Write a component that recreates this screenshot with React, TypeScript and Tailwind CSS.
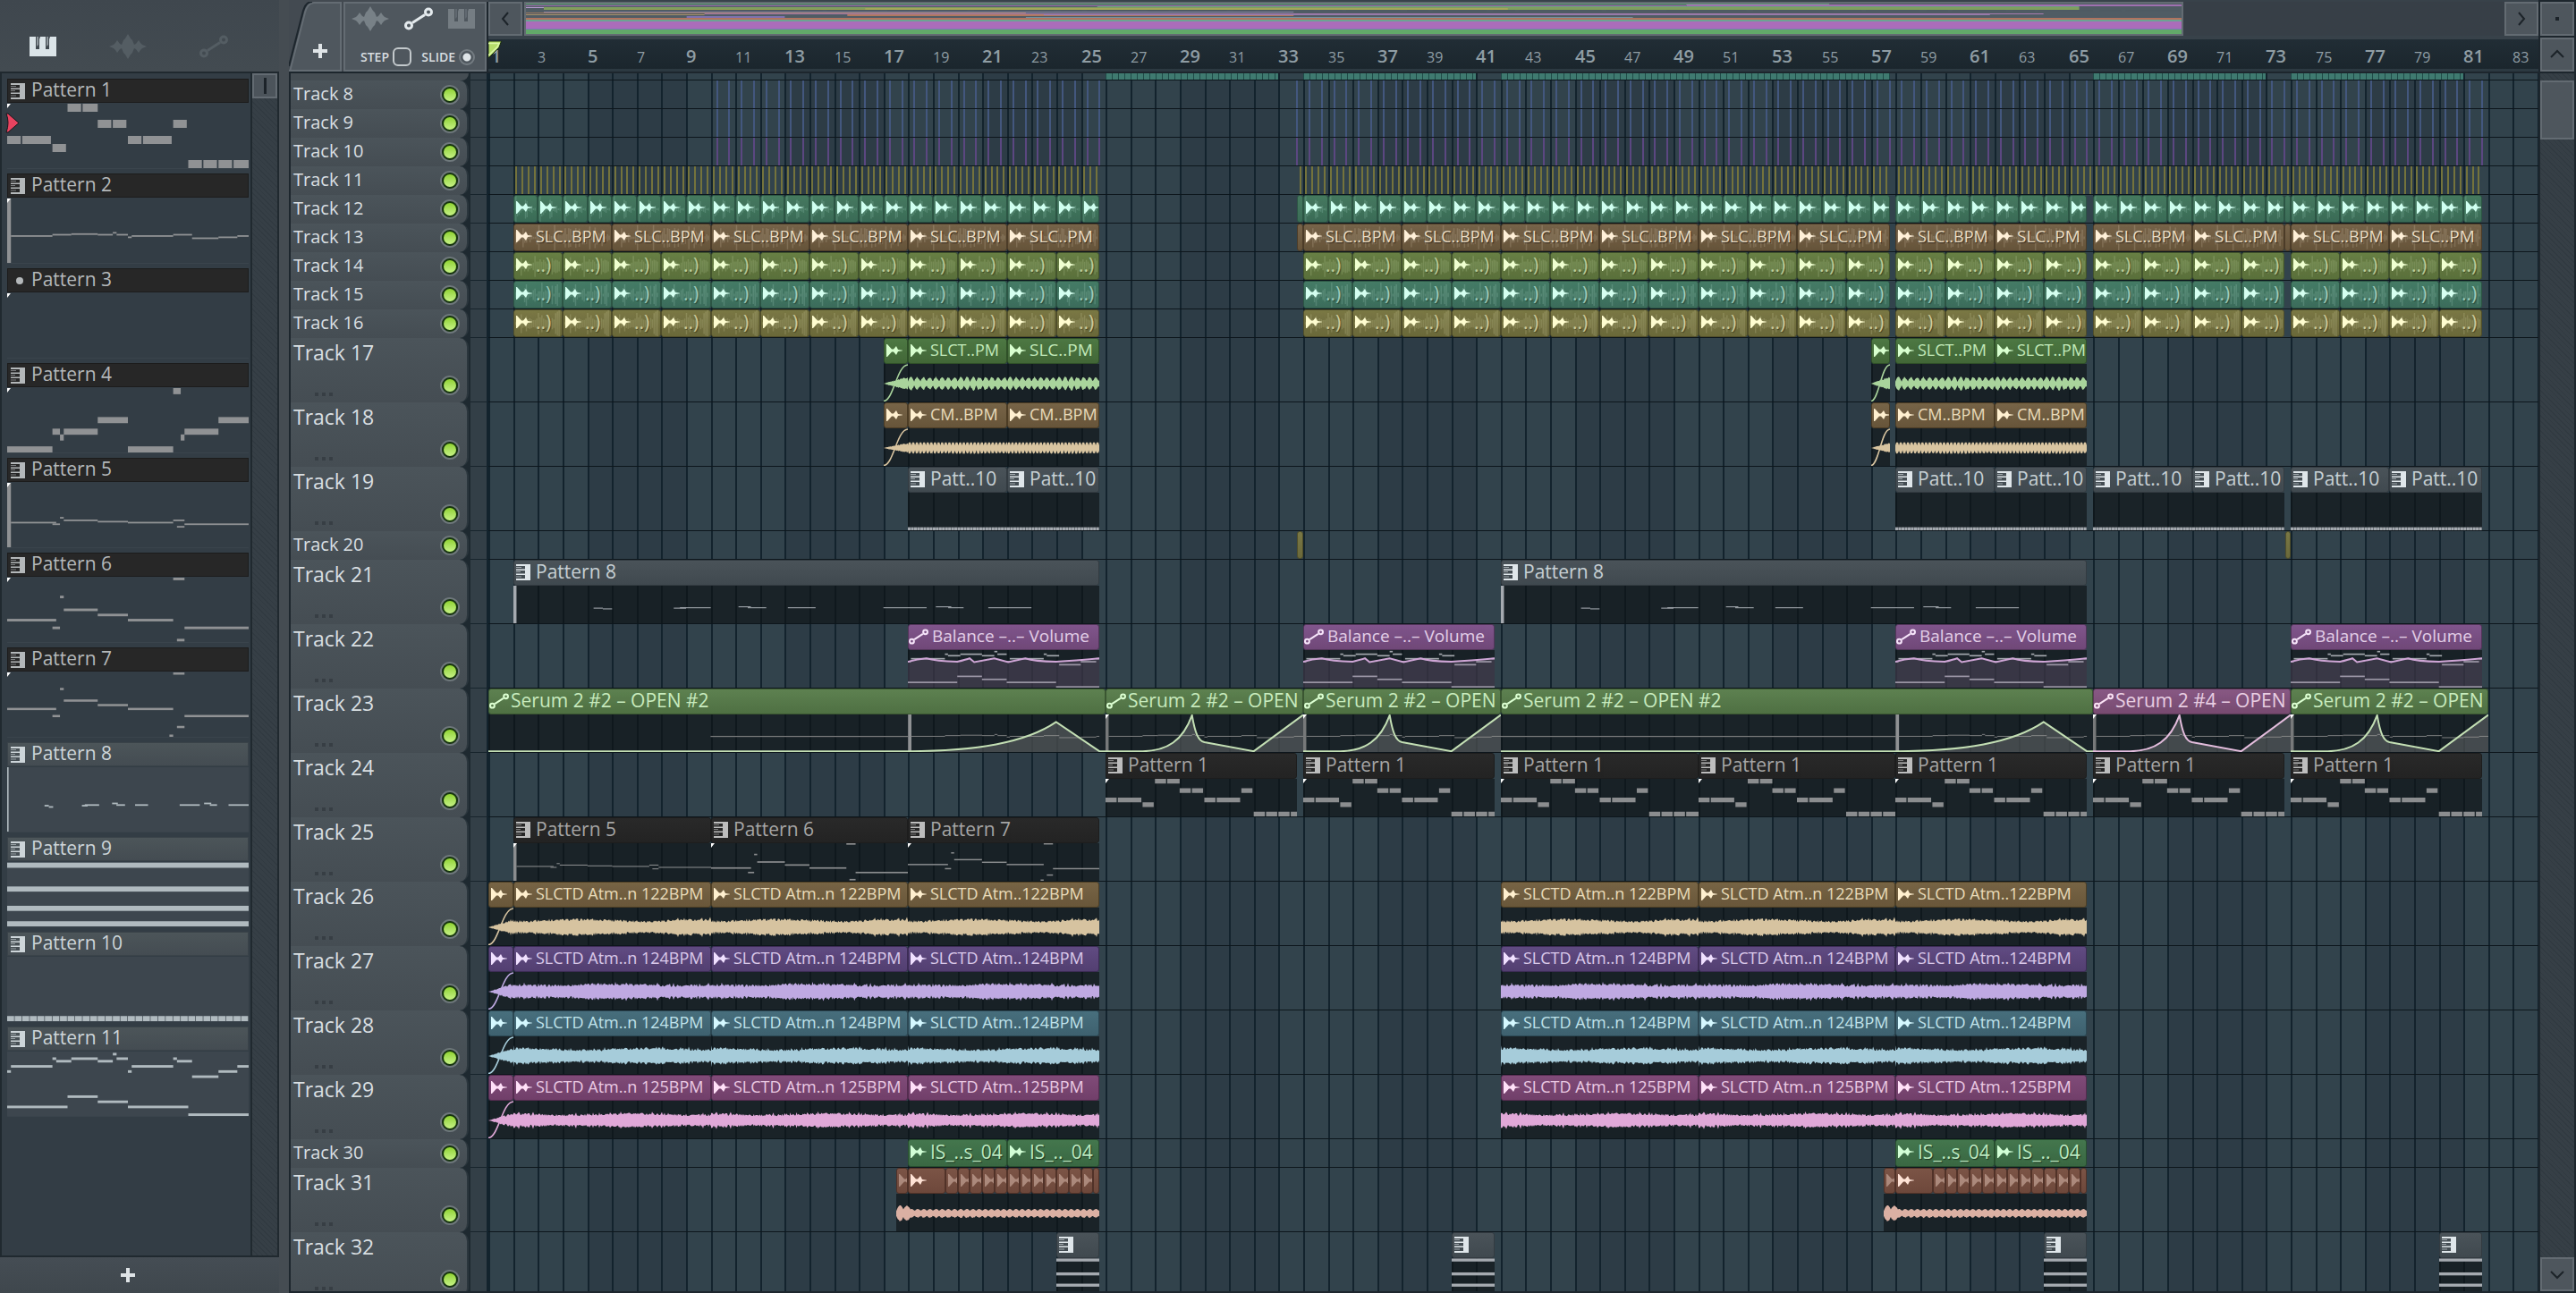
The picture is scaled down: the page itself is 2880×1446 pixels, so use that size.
import { ReactNode } from 'react';

const BAR = 27.6;
const TOTAL_BARS = 84;

// left edge of a bar on the timeline, snapped to a whole pixel
const at = (bar: number) => Math.round(0.2 + (bar - 1) * BAR);

type Note = [x: number, width: number, y: number];

type PatternShape = {
  notes: Note[];
  height: number;
  units: number;
  lead?: number;
};

// note positions are in 1/8 bars, y and height in percent
const SHAPES: Record<number, PatternShape> = {
  1: {
    height: 12.5,
    units: 64,
    notes: [
      [0, 3.6, 50], [4, 7.6, 50], [12, 3.6, 62.5], [16, 3.6, 0], [20, 4, 0],
      [24, 3.6, 25], [28, 3.6, 25], [32, 3.6, 50], [36, 7.6, 50], [44, 3.6, 25],
      [48, 3.6, 87.5], [52, 3.6, 87.5], [56, 3.6, 87.5], [60, 4, 87.5],
    ],
  },
  2: {
    height: 2.5,
    units: 64,
    lead: 1,
    notes: [
      [1, 11, 57], [12, 5, 55], [17, 7, 54], [24, 4, 55], [28, 1, 52], [29, 3, 55],
      [32, 1, 59], [33, 11, 57], [44, 5, 55], [49, 7, 60.5], [56, 5, 59], [61, 3, 57],
    ],
  },
  3: { height: 4, units: 64, notes: [] },
  4: {
    height: 9.5,
    units: 64,
    notes: [
      [0, 12, 90.5], [12, 2, 63], [14, 1, 72], [15, 9, 63], [24, 8, 45],
      [32, 12, 90.5], [44, 2, 0], [46, 1, 72], [47, 9, 63], [56, 8, 45],
    ],
  },
  5: {
    height: 2.5,
    units: 64,
    lead: 1,
    notes: [
      [1, 12, 60.5], [12, 2, 63], [14, 1, 53], [15, 9, 57], [24, 8, 59],
      [32, 12, 60.5], [44, 3, 57], [45, 2, 67], [47, 17, 63],
    ],
  },
  6: {
    height: 4,
    units: 64,
    notes: [
      [0, 13, 64], [12, 2, 76], [14, 1, 28], [15, 9, 48], [24, 8, 56],
      [32, 12, 64], [44, 3, 0], [45, 2, 95], [47, 17, 76],
    ],
  },
  7: {
    height: 3.5,
    units: 64,
    notes: [
      [0, 13, 55], [12, 2, 66], [14, 1, 24], [15, 9, 42], [24, 8, 49], [32, 12, 55],
      [43, 1, 96.5], [44, 3, 0], [45, 2, 83], [47, 17, 66],
    ],
  },
  8: {
    height: 2.5,
    units: 168,
    lead: 1,
    notes: [
      [26, 3, 58.5], [29, 3, 60.5], [52, 4, 58.5], [54, 10, 57.5], [73, 4, 55],
      [76, 6, 57.5], [89, 9, 57.5], [120, 14, 57.5], [137, 5, 55], [141, 5, 57.5],
      [154, 14, 57.5],
    ],
  },
  9: {
    height: 8,
    units: 64,
    notes: [[0, 64, 1], [0, 64, 38], [0, 64, 68], [0, 64, 92]],
  },
  10: {
    height: 8,
    units: 32,
    notes: Array.from({ length: 32 }, (_, i): Note => [i, 0.92, 92]),
  },
  11: {
    height: 4,
    units: 64,
    notes: [
      [0, 1, 29], [1, 11, 21], [12, 1, 9], [13, 4, 13], [17, 7, 9], [24, 4, 13],
      [28, 1, 2], [29, 3, 9], [32, 1, 29], [33, 11, 21], [44, 1, 9], [45, 4, 13],
      [49, 7, 37], [56, 5, 29], [61, 3, 21], [0, 16, 84], [16, 8, 68], [24, 8, 76],
      [32, 16, 84], [48, 16, 96],
    ],
  },
};

const PATTERNS = [
  { id: 1, dark: true, corner: true },
  { id: 2, dark: true, corner: true },
  { id: 3, dark: true, corner: true, empty: true },
  { id: 4, dark: true, corner: true },
  { id: 5, dark: true, corner: true },
  { id: 6, dark: true, corner: true },
  { id: 7, dark: true, corner: true },
  { id: 8 },
  { id: 9 },
  { id: 10 },
  { id: 11 },
];

const HEADS = {
  teal: 'from-[#46795f] to-[#3a6c57] border-[#2c5544] text-[#cffff0]',
  brown: 'from-[#77644a] to-[#66543a] border-[#4c3c28] text-[#fff0d8]',
  lime: 'from-[#687f45] to-[#5a703b] border-[#43542c] text-[#efffd0]',
  mint: 'from-[#467c66] to-[#3c6d5b] border-[#2c5544] text-[#d5fff0]',
  olive: 'from-[#7a7845] to-[#6b693a] border-[#504e2a] text-[#fffdd0]',
  green: 'from-[#4d7843] to-[#426737] border-[#2f5028] text-[#d8ffcf]',
  tan: 'from-[#776447] to-[#67553a] border-[#4c3c24] text-[#fff0d0]',
  slate: 'from-[#4a5359] to-[#40494f] border-[#333b41] text-[#dfe6ea]',
  purple: 'from-[#80558c] to-[#704878] border-[#53355a] text-[#f6e4fa]',
  moss: 'from-[#5d8150] to-[#4f7043] border-[#3a5631] text-[#dcffd2]',
  orchid: 'from-[#885884] to-[#774b70] border-[#593854] text-[#fbe3f5]',
  black: 'from-[#292929] to-[#232323] border-[#1d1d1d] text-[#bdbdbd]',
  gold: 'from-[#776445] to-[#69573a] border-[#4e3f25] text-[#fff0cf]',
  violet: 'from-[#604b82] to-[#533f71] border-[#3c2c55] text-[#f0e0ff]',
  sea: 'from-[#486f7d] to-[#3e616f] border-[#2c4854] text-[#d5f8ff]',
  pink: 'from-[#804b78] to-[#713f6a] border-[#542c4f] text-[#ffe0f8]',
  leaf: 'from-[#44774e] to-[#3a6843] border-[#28502f] text-[#d2ffd6]',
  rust: 'from-[#7b5446] to-[#6e483b] border-[#513228] text-[#ffe3d6]',
};

const WAVES: Record<string, string> = {
  green: 'text-[#a9d49c]',
  tan: 'text-[#d8c4a0]',
  gold: 'text-[#d6c3a0]',
  violet: 'text-[#bfa9e2]',
  sea: 'text-[#a6ccda]',
  pink: 'text-[#e0a8d8]',
  rust: 'text-[#dbb0a3]',
};

type Tone = keyof typeof HEADS;
type IconKind = 'wave' | 'piano' | 'auto' | 'none';

type ClipData = {
  from: number;
  to: number;
  label?: string;
  tone: Tone;
  icon?: IconKind;
  ghost?: boolean;
  body?: ReactNode;
};

type TrackData = {
  id: number;
  tall: boolean;
  clips: ClipData[];
  under?: ReactNode;
};

const noise = (n: number) => {
  const v = Math.sin(n * 127.1 + 311.7) * 43758.5453;
  return v - Math.floor(v);
};

const PianoIcon = ({ className }: { className?: string }) => (
  <svg viewBox="0 0 30 22" className={className} fill="currentColor">
    <path d="M0 0H7V14H11V3L12 0H18V14H22V3L23 0H30V22H0Z" />
    <path d="M8.500 0H9.500V9L8.500 11ZM19.500 0H20.500V9L19.500 11Z" />
  </svg>
);

const WaveIcon = ({ className }: { className?: string }) => (
  <svg viewBox="0 0 42 28" className={className} fill="currentColor">
    <path d="M0 14L5 12L7 10L9 7L12 11L14 12L16 7L18 5L21 0L24 5L26 7L28 12L30 11L33 7L35 10L37 12L42 14L37 16L35 18L33 21L30 17L28 16L26 21L24 23L21 28L18 23L16 21L14 16L12 17L9 21L7 18L5 16Z" />
  </svg>
);

const AutoIcon = ({ className }: { className?: string }) => (
  <svg
    viewBox="0 0 32 26"
    className={className}
    fill="none"
    stroke="currentColor"
    strokeWidth="3"
  >
    <circle cx="5" cy="20.500" r="3.500" />
    <circle cx="27" cy="5.500" r="3.500" />
    <path d="M9 17.500L23 8.500" />
  </svg>
);

const ClipPiano = () => (
  <svg viewBox="0 0 16 18" className="h-[18px] w-4 shrink-0" fill="currentColor">
    <path d="M0 0H16V18H0V16H10V12H0V10.500H10V7H0V5.500H10V2H0Z" />
    <path d="M0 3H6V4H0ZM0 8H5V9H0ZM0 13.500H6V14.500H0Z" opacity="0.6" />
  </svg>
);

const ClipWave = () => (
  <svg viewBox="0 0 18 14" className="h-3.5 w-[18px] shrink-0" fill="currentColor">
    <path d="M0 0L1 0L6 5.500L8 5.500L11 2L13 6L18 6.700V7.300L13 8L11 12L8 8.500L6 8.500L1 14H0Z" />
  </svg>
);

const ClipIcon = ({ kind }: { kind: IconKind }) => {
  if (kind === 'wave') return <ClipWave />;
  if (kind === 'piano') return <ClipPiano />;
  if (kind === 'auto') return <AutoIcon className="h-[18px] w-[22px] shrink-0" />;
  return null;
};

const Notes = ({ id, units }: { id: number; units?: number }) => {
  const shape = SHAPES[id];
  return (
    <svg
      viewBox={`0 0 ${units || shape.units} 100`}
      preserveAspectRatio="none"
      className="block h-full w-full"
      fill="currentColor"
    >
      {shape.lead && <rect x="0" y="0" width={shape.lead} height="100" />}
      {shape.notes.map(([x, w, y], i) => (
        <rect key={i} x={x} y={y} width={w} height={shape.height} />
      ))}
    </svg>
  );
};

const Corner = () => (
  <svg viewBox="0 0 4 5" className="absolute top-0 left-0 h-[5px] w-1">
    <path d="M0 0H4L0 5Z" fill="#fff" />
  </svg>
);

const NotesBody = ({
  id,
  units,
  corner,
  color,
}: {
  id: number;
  units?: number;
  corner?: boolean;
  color?: string;
}) => (
  <div className={`relative h-full ${color || 'text-[#8b8d8f]'}`}>
    <Notes id={id} units={units} />
    {corner && <Corner />}
  </div>
);

// audio outline, mirrored round the centre line
const Waveform = ({
  tone,
  bars,
  amp,
  seed,
  kind = 'full',
}: {
  tone: string;
  bars: number;
  amp: number;
  seed: number;
  kind?: 'full' | 'pulse' | 'dense' | 'fade' | 'hit';
}) => {
  const width = Math.round(bars * BAR);
  const top: string[] = [];
  const bottom: string[] = [];
  for (let x = 0; x <= width; x += 1) {
    const r = noise(x + seed);
    let a = amp * (0.68 + 0.32 * r + 0.1 * Math.sin(x / 23 + seed));
    if (noise(x * 3 + seed) > 0.94) a += amp * 0.22;
    if (kind === 'pulse') a = amp * (0.3 + 0.7 * Math.abs(Math.sin((x * Math.PI) / 6.9))) * (0.8 + 0.2 * r);
    if (kind === 'dense') a = amp * (x % 4 === 0 ? 0.5 : 1.05);
    if (kind === 'fade') a = Math.min(1, x / (width * 0.9)) * amp * (0.7 + 0.3 * r);
    if (kind === 'hit') {
      const bead = 0.55 + 0.45 * Math.abs(Math.sin((x * Math.PI) / 6.9));
      a = x < 9 ? 9 * Math.sin(((x + 1) / 9) * 2.6) : x < 16 ? 9 - Math.abs(x - 12) * 0.9 : amp * bead;
    }
    top.push(`${x} ${(22 - a).toFixed(1)}`);
    bottom.unshift(`${x} ${(22 + a * (0.85 + 0.2 * noise(x + 9))).toFixed(1)}`);
  }
  return (
    <svg
      viewBox={`0 0 ${width} 42`}
      preserveAspectRatio="none"
      className={`block h-full w-full ${WAVES[tone]}`}
      fill="currentColor"
    >
      <path d={`M${top.join('L')}L${bottom.join('L')}Z`} />
      {kind === 'fade' && (
        <path
          d={`M0 41.500C${width * 0.4} 41.500 ${width * 0.55} 1 ${width} 1`}
          fill="none"
          stroke="currentColor"
          strokeWidth="1.6"
        />
      )}
    </svg>
  );
};

const Curve = ({
  d,
  units,
  fill,
  stroke,
}: {
  d: string;
  units: number;
  fill: string;
  stroke: string;
}) => (
  <svg
    viewBox={`0 0 ${units} 100`}
    preserveAspectRatio="none"
    className="absolute inset-0 h-full w-full"
  >
    <path d={`${d}V100H0Z`} fill={fill} />
    <path d={d} fill="none" stroke={stroke} strokeWidth="2" vectorEffect="non-scaling-stroke" />
  </svg>
);

const PEAK = 'M0 98H12C20 97 25 70 28 2C29 50 30 70 32 74L48 98L64 1';
const GREY_FILL = 'rgba(150,150,150,0.35)';

const PeakBody = ({ stroke }: { stroke: string }) => (
  <div className="relative h-full text-[#77797a]">
    <Notes id={2} />
    <Corner />
    <Curve d={PEAK} units={64} fill={GREY_FILL} stroke={stroke} />
  </div>
);

// long automation: flat, then a ramp in the last eight bars
const RampBody = ({ bars, lineFrom }: { bars: number; lineFrom: number }) => {
  const units = bars * 8;
  const start = units - 64;
  return (
    <div className="relative h-full text-[#77797a]">
      <svg
        viewBox={`0 0 ${units} 100`}
        preserveAspectRatio="none"
        className="block h-full w-full"
        fill="currentColor"
      >
        <rect x={lineFrom * 8} y="57" width={start - lineFrom * 8} height="3" />
        <rect x={start} y="0" width="1.1" height="100" fill="#909294" />
        {SHAPES[2].notes.map(([x, w, y], i) => (
          <rect key={i} x={start + x} y={y} width={Math.min(w, 62 - x)} height="2.5" />
        ))}
      </svg>
      <Curve
        d={`M0 98H${start}C${start + 22} 97 ${start + 38} 76 ${start + 48} 20L${start + 62} 98H${units}`}
        units={units}
        fill={GREY_FILL}
        stroke="#c3dfb4"
      />
    </div>
  );
};

const BalanceBody = () => (
  <div className="relative h-full text-[#a3a7ad]">
    <Notes id={11} units={62} />
    <Curve
      d="M0 31Q3 24 6 22Q9 29 16 31Q19 25 20 22L21.500 32L28 22L32.500 32L38 22Q41 30 48 31Q54 28 62 22"
      units={62}
      fill="rgba(140,110,150,0.28)"
      stroke="#cfa6d6"
    />
  </div>
);

// endings of the five sections that the loops are cut to
const SECTIONS: [number, number][] = [
  [2, 25.75],
  [34, 57.75],
  [58, 65.75],
  [66, 73.75],
  [74, 81.75],
];

const FaintWave = ({ bars, seed }: { bars: number; seed: number }) => {
  const width = Math.round(bars * BAR);
  let d = '';
  for (let x = 2; x < width - 1; x += 2) {
    const a = 1 + noise(x + seed) ** 3 * 12 + 4 * noise(x * 2 + seed);
    d += `M${x} ${16 - a}V${16 + a}`;
  }
  return (
    <svg
      viewBox={`0 0 ${width} 31`}
      preserveAspectRatio="none"
      className="block h-full w-full opacity-15"
    >
      <path d={d} stroke="currentColor" strokeWidth="1.5" fill="none" />
    </svg>
  );
};

const loops = (
  step: number,
  tone: Tone,
  label: (from: number, last: boolean) => string | undefined,
  seed: number
): ClipData[] =>
  SECTIONS.flatMap(([start, end]) => {
    const clips: ClipData[] = [];
    for (let from = start; from < end; from += step) {
      const to = Math.min(from + step, end);
      clips.push({
        from,
        to,
        tone,
        icon: 'wave',
        label: label(from, to === end),
        body: <FaintWave bars={to - from} seed={seed} />,
      });
    }
    return clips;
  });

const sliver = (from: number, to: number, tone: Tone): ClipData => ({ from, to, tone, icon: 'none' });

const pairs = (tone: Tone, first: string, last: string, kind: 'pulse' | 'dense', amp: number): ClipData[] => [
  { from: 17, to: 18, tone, icon: 'wave', body: <Waveform tone={tone} bars={1} amp={amp} seed={3} kind="fade" /> },
  { from: 18, to: 22, tone, icon: 'wave', label: first, body: <Waveform tone={tone} bars={4} amp={amp} seed={5} kind={kind} /> },
  { from: 22, to: 25.75, tone, icon: 'wave', label: last, body: <Waveform tone={tone} bars={3.75} amp={amp} seed={5} kind={kind} /> },
  { from: 57, to: 57.75, tone, icon: 'wave', body: <Waveform tone={tone} bars={0.75} amp={amp} seed={3} kind="fade" /> },
  { from: 58, to: 62, tone, icon: 'wave', label: first, body: <Waveform tone={tone} bars={4} amp={amp} seed={5} kind={kind} /> },
  { from: 62, to: 65.75, tone, icon: 'wave', label: tone === 'green' ? first : last, body: <Waveform tone={tone} bars={3.75} amp={amp} seed={5} kind={kind} /> },
];

const atmos = (tone: Tone, bpm: string, seed: number, amp: number): ClipData[] => {
  const part = (from: number, to: number): ClipData => ({
    from,
    to,
    tone,
    icon: 'wave',
    label: to % 1 ? `SLCTD Atm..${bpm}BPM` : `SLCTD Atm..n ${bpm}BPM`,
    body: <Waveform tone={tone} bars={to - from} amp={amp} seed={seed} />,
  });
  return [
    { from: 1, to: 2, tone, icon: 'wave', body: <Waveform tone={tone} bars={1} amp={amp} seed={seed} kind="fade" /> },
    part(2, 10),
    part(10, 18),
    part(18, 25.75),
    part(42, 50),
    part(50, 58),
    part(58, 65.75),
  ];
};

const chops = (start: number): ClipData[] => {
  const tone: Tone = 'rust';
  const clips: ClipData[] = [
    { from: start, to: start + 0.5, tone, icon: 'wave', ghost: true },
    { from: start + 0.5, to: start + 2, tone, icon: 'wave' },
  ];
  for (let from = start + 2; from < start + 8; from += 0.5) {
    clips.push({ from, to: from + 0.5, tone, icon: 'wave', ghost: true });
  }
  clips.push({ from: start + 8, to: start + 8.25, tone, icon: 'none' });
  return clips;
};

const chopWave = (start: number) => (
  <div
    className="absolute top-[29px] bottom-0 bg-[#0e1216]/65"
    style={{ left: at(start), width: at(start + 8.25) - at(start) }}
  >
    <Waveform tone="rust" bars={8.25} amp={5} seed={2} kind="hit" />
  </div>
);

// one-shot hits that are too short for a label
const Hits = ({
  ranges,
  step,
  color,
}: {
  ranges: [number, number][];
  step: number;
  color: string;
}) => {
  let d = '';
  ranges.forEach(([start, end]) => {
    for (let bar = start; bar < end; bar += step) d += `M${at(bar)} 0V32`;
  });
  return (
    <svg width={at(TOTAL_BARS)} height="32" className="absolute top-0 left-0 h-full">
      <path d={d} stroke={color} strokeWidth="2" />
    </svg>
  );
};

const HIT_RANGES: [number, number][] = [[10.25, 26], [33.75, 82]];
const HAT_RANGES: [number, number][] = [[2.125, 25.8], [33.875, 57.8], [58.125, 81.8]];

const patterns = (id: number, starts: [number, number][], tone: Tone, label = `Pattern ${id}`): ClipData[] =>
  starts.map(([from, to]) => ({
    from,
    to,
    tone,
    icon: 'piano',
    label,
    body: (
      <NotesBody
        id={id}
        units={(to - from) * 8}
        corner={tone === 'black'}
        color={tone === 'black' ? 'text-[#8b8d8f]' : 'text-[#a5aab0]'}
      />
    ),
  }));

const TRACKS: TrackData[] = [
  { id: 8, tall: false, clips: [], under: <Hits ranges={HIT_RANGES} step={0.5} color="#43577e" /> },
  { id: 9, tall: false, clips: [], under: <Hits ranges={HIT_RANGES} step={0.5} color="#43577e" /> },
  { id: 10, tall: false, clips: [], under: <Hits ranges={HIT_RANGES} step={0.5} color="#5b4781" /> },
  { id: 11, tall: false, clips: [], under: <Hits ranges={HAT_RANGES} step={0.25} color="#74733c" /> },
  {
    id: 12,
    tall: false,
    clips: [...loops(1, 'teal', () => undefined, 4), sliver(33.75, 34, 'teal'), sliver(73.75, 74, 'teal')],
  },
  {
    id: 13,
    tall: false,
    clips: [
      ...loops(4, 'brown', (_, last) => (last ? 'SLC..PM' : 'SLC..BPM'), 8),
      sliver(33.75, 34, 'brown'),
      sliver(73.75, 74, 'brown'),
    ],
  },
  { id: 14, tall: false, clips: loops(2, 'lime', () => '..)', 15) },
  { id: 15, tall: false, clips: loops(2, 'mint', () => '..)', 22) },
  { id: 16, tall: false, clips: loops(2, 'olive', () => '..)', 31) },
  { id: 17, tall: true, clips: pairs('green', 'SLCT..PM', 'SLC..PM', 'pulse', 8) },
  { id: 18, tall: true, clips: pairs('tan', 'CM..BPM', 'CM..BPM', 'dense', 6) },
  {
    id: 19,
    tall: true,
    clips: patterns(
      10,
      [[18, 22], [22, 25.75], [58, 62], [62, 65.75], [66, 70], [70, 73.75], [74, 78], [78, 81.75]],
      'slate',
      'Patt..10'
    ),
  },
  { id: 20, tall: false, clips: [sliver(33.75, 34, 'olive'), sliver(73.8, 74, 'olive')] },
  { id: 21, tall: true, clips: patterns(8, [[2, 25.75], [42, 65.75]], 'slate') },
  {
    id: 22,
    tall: true,
    clips: [18, 34, 58, 74].map((from) => ({
      from,
      to: from + 7.75,
      tone: 'purple',
      icon: 'auto',
      label: 'Balance –..– Volume',
      body: <BalanceBody />,
    })),
  },
  {
    id: 23,
    tall: true,
    clips: [
      { from: 1, to: 26, tone: 'moss', icon: 'auto', label: 'Serum 2 #2 – OPEN #2', body: <RampBody bars={25} lineFrom={9} /> },
      { from: 26, to: 34, tone: 'moss', icon: 'auto', label: 'Serum 2 #2 – OPEN', body: <PeakBody stroke="#c3dfb4" /> },
      { from: 34, to: 42, tone: 'moss', icon: 'auto', label: 'Serum 2 #2 – OPEN', body: <PeakBody stroke="#c3dfb4" /> },
      { from: 42, to: 66, tone: 'moss', icon: 'auto', label: 'Serum 2 #2 – OPEN #2', body: <RampBody bars={24} lineFrom={0} /> },
      { from: 66, to: 74, tone: 'orchid', icon: 'auto', label: 'Serum 2 #4 – OPEN', body: <PeakBody stroke="#e3bcdc" /> },
      { from: 74, to: 82, tone: 'moss', icon: 'auto', label: 'Serum 2 #2 – OPEN', body: <PeakBody stroke="#c3dfb4" /> },
    ],
  },
  {
    id: 24,
    tall: true,
    clips: patterns(
      1,
      [[26, 33.75], [34, 41.75], [42, 50], [50, 58], [58, 65.75], [66, 73.75], [74, 81.75]],
      'black'
    ),
  },
  {
    id: 25,
    tall: true,
    clips: [
      ...patterns(5, [[2, 10]], 'black'),
      ...patterns(6, [[10, 18]], 'black'),
      ...patterns(7, [[18, 25.75]], 'black'),
    ],
  },
  { id: 26, tall: true, clips: atmos('gold', '122', 11, 9) },
  { id: 27, tall: true, clips: atmos('violet', '124', 47, 9) },
  { id: 28, tall: true, clips: atmos('sea', '124', 83, 9) },
  { id: 29, tall: true, clips: atmos('pink', '125', 65, 8) },
  {
    id: 30,
    tall: false,
    clips: [18, 58].flatMap((from): ClipData[] => [
      { from, to: from + 4, tone: 'leaf', icon: 'wave', label: 'IS_..s_04' },
      { from: from + 4, to: from + 7.75, tone: 'leaf', icon: 'wave', label: 'IS_.._04' },
    ]),
  },
  {
    id: 31,
    tall: true,
    clips: [...chops(17.5), ...chops(57.5)],
    under: (
      <>
        {chopWave(17.5)}
        {chopWave(57.5)}
      </>
    ),
  },
  {
    id: 32,
    tall: true,
    clips: patterns(9, [[24, 25.75], [40, 41.75], [64, 65.75], [80, 81.75]], 'slate', ''),
  },
];

const labelSize = (label: string) => {
  if (label === '..)') return 'text-[21px] opacity-60';
  if (label.endsWith('BPM') || label.startsWith('SLCT')) return 'text-[18px] opacity-85';
  if (label.startsWith('Balance') || label.startsWith('SLC')) return 'text-[19px] opacity-85';
  return 'text-[21px] opacity-85';
};

const Clip = ({ clip, tall }: { clip: ClipData; tall: boolean }) => {
  const auto = clip.icon === 'auto';
  const serum = clip.label?.startsWith('Serum');
  return (
    <div
      className="absolute inset-y-0 flex flex-col"
      style={{ left: at(clip.from), width: at(clip.to) - at(clip.from) }}
    >
      <div
        className={`relative flex items-start overflow-hidden rounded-[3px] border bg-linear-to-b ${
          tall ? 'h-[29px] shrink-0' : 'h-full'
        } ${HEADS[clip.tone]}`}
      >
        {!tall && clip.body && <div className="absolute inset-0">{clip.body}</div>}
        <span
          className={`relative flex h-[26px] shrink-0 items-center ${auto ? '' : 'pl-0.5'} ${
            serum || !auto ? 'w-6' : 'w-[26px]'
          } ${clip.ghost ? 'opacity-40' : ''}`}
        >
          <ClipIcon kind={clip.icon || 'none'} />
        </span>
        {clip.label && (
          <span
            className={`relative whitespace-nowrap ${labelSize(clip.label)} ${
              tall ? 'leading-6' : 'leading-[26px] text-shadow-[1px_1px_1px_#000000a0]'
            }`}
          >
            {clip.label}
          </span>
        )}
      </div>
      {tall && clip.body && <div className="h-[42px] overflow-hidden bg-[#0e1216]/65">{clip.body}</div>}
    </div>
  );
};

const Lane = ({ track }: { track: TrackData }) => (
  <div
    className={`relative shrink-0 border-b border-[#0d161c] ${track.tall ? 'h-[72px]' : 'h-8'}`}
  >
    {track.under}
    {track.clips.map((clip, i) => (
      <Clip key={i} clip={clip} tall={track.tall} />
    ))}
  </div>
);

const Led = ({ label }: { label: string }) => (
  <input
    type="checkbox"
    defaultChecked
    aria-label={label}
    className="m-0.5 block size-[18px] shrink-0 appearance-none rounded-full border-2 border-[#17350f] bg-linear-to-b from-[#8fd22c] to-[#c6f284] ring-2 ring-[#6f787c]"
  />
);

const TrackHeader = ({ track }: { track: TrackData }) => (
  <div
    className={`flex w-[199px] shrink-0 justify-between rounded-r-[10px] border-r-2 border-[#2b363d] bg-linear-to-b from-[#4b545a] to-[#454d53] pr-2 pl-[3px] text-[#d9dfe2] ${
      track.tall ? 'h-[72px]' : 'h-8 items-center'
    }`}
  >
    <div className="flex flex-col justify-between">
      <span
        className={
          track.tall ? 'text-[23px] leading-[33px]' : 'pb-0.5 text-[20px] leading-7'
        }
      >
        Track {track.id}
      </span>
      {track.tall && (
        <span className="flex gap-1 pb-[7px] pl-6">
          <i className="size-1 bg-[#373e44]" />
          <i className="size-1 bg-[#373e44]" />
          <i className="size-1 bg-[#373e44]" />
        </span>
      )}
    </div>
    <span className={track.tall ? 'self-end pb-2' : ''}>
      <Led label={`Track ${track.id} on`} />
    </span>
  </div>
);

const GridLines = () => (
  <div className="absolute inset-0 flex overflow-hidden">
    {Array.from({ length: TOTAL_BARS }, (_, i) => (
      <span
        key={i}
        className={`shrink-0 border-l-2 border-[#13232d] ${i % 8 < 4 ? 'bg-[#32434c]' : 'bg-[#2d3c46]'}`}
        style={{ width: at(i + 2) - at(i + 1) }}
      />
    ))}
  </div>
);

// last row of track 7, mostly scrolled out of view
const STRIPS: [number, number][] = [[26, 33], [34, 41], [42, 57.75], [66, 73], [74, 81]];

const Ruler = () => (
  <div className="relative flex h-9 overflow-hidden border-b-[3px] border-[#2c3941] bg-linear-to-b from-[#212d35] to-[#1b262d] text-[#8f9da4]">
    {Array.from({ length: TOTAL_BARS / 2 }, (_, i) => {
      const bar = i * 2 + 1;
      return (
        <span
          key={bar}
          className={`shrink-0 ${
            i % 2 ? 'text-[16px] leading-[40px]' : 'text-[20px] leading-[37px] font-semibold'
          } ${bar === 1 ? 'pl-[3px]' : ''}`}
          style={{ width: at(bar + 2) - at(bar) }}
        >
          {bar}
        </span>
      );
    })}
    <svg viewBox="0 0 16 20" className="absolute top-0.5 left-0 h-5 w-4">
      <path d="M0 0H14.500L12 7L0 19Z" fill="#b5dd6a" stroke="#1a2a10" strokeWidth="1" />
      <path d="M0 2.500H12L10 6.500L0 16" fill="none" stroke="#dcf7a8" strokeWidth="1.500" />
    </svg>
  </div>
);

const GreyButton = ({ label, children, className }: { label: string; children: ReactNode; className?: string }) => (
  <button
    type="button"
    aria-label={label}
    className={`flex size-[38px] shrink-0 items-center justify-center border-2 border-[#636b72] bg-[#4e565d] text-[#1c2329] ${className || ''}`}
  >
    {children}
  </button>
);

const Chevron = ({ d }: { d: string }) => (
  <svg viewBox="0 0 20 20" className="size-5" fill="none" stroke="currentColor" strokeWidth="2">
    <path d={d} />
  </svg>
);

const BANDS: [string, number, number, number, number][] = [
  ['#62a27a', 0, 1460, 0, 1], ['#a070b0', 1300, 1855, 1, 2], ['#9a70ab', 0, 1300, 2, 1], ['#b59bd0', 0, 380, 4, 1],
  ['#7f9f5e', 20, 1740, 4, 3], ['#939c56', 50, 550, 6, 1], ['#a3a65a', 380, 1100, 5, 2],
  ['#6aa07a', 640, 1740, 3, 1], ['#9b7860', 0, 560, 10, 1], ['#8884a6', 20, 860, 9, 1],
  ['#a77bb0', 200, 1700, 11, 1], ['#a8906a', 0, 200, 12, 1], ['#b0785f', 360, 860, 12, 2],
  ['#7d72b0', 180, 290, 14, 2], ['#9079a8', 580, 1640, 12, 1], ['#6f93a0', 560, 1240, 15, 1],
  ['#b2735f', 0, 1855, 16, 2], ['#6ba393', 0, 1855, 18, 2], ['#aa6dba', 0, 1855, 20, 8],
  ['#7c77bb', 0, 1855, 28, 1], ['#62a869', 0, 1855, 29, 5],
];

const Overview = () => (
  <div className="h-[38px] w-[83.8%] border-2 border-[#636b72] bg-[#505c64]">
    <svg viewBox="0 0 1855 34" preserveAspectRatio="none" className="block h-full w-full">
      {BANDS.map(([fill, x1, x2, y, h], i) => (
        <rect key={i} x={x1} y={y} width={x2 - x1} height={h} fill={fill} />
      ))}
      <path d="M240 8H1855" stroke="#4c5960" strokeWidth="1" strokeDasharray="60 8 24 5" />
    </svg>
  </div>
);

const Plus = () => (
  <svg viewBox="0 0 18 18" className="size-[18px]" fill="#dfe4e7">
    <path d="M7 1H11V7H17V11H11V17H7V11H1V7H7Z" />
  </svg>
);

const HATCH =
  'bg-[#363f46] bg-[repeating-linear-gradient(45deg,#313a41_0_1px,transparent_1px_4px)]';

const PatternCard = ({ item }: { item: (typeof PATTERNS)[number] }) => (
  <li className="relative h-[106px]">
    <button type="button" className="block w-full text-left">
      <span
        className={`flex h-[27px] items-start border pl-[3px] ${
          item.dark
            ? 'border-[#1c1c1c] bg-[#272727] text-[#b4b8ba]'
            : 'border-[#3a4349] bg-linear-to-b from-[#4c5559] to-[#444c52] text-[#cdd5d9]'
        }`}
      >
        <span className="flex h-[26px] w-[23px] items-center">
          {item.empty ? <i className="ml-1.5 size-2 rounded-full bg-[#b4b8ba]" /> : <ClipPiano />}
        </span>
        <span className="text-[21px] leading-[22px]">Pattern {item.id}</span>
      </span>
      <span
        className={`relative mt-px block h-[73px] border-b border-[#3a444c] ${
          item.dark ? 'text-[#909294]' : 'bg-[#3d464e] text-[#b0babf]'
        }`}
      >
        <Notes id={item.id} />
        {item.corner && <Corner />}
      </span>
    </button>
    {item.id === 1 && (
      <svg viewBox="0 0 16 23" className="absolute top-[38px] -left-0.5 h-[23px] w-4">
        <path d="M1 1Q5 11 1 22L3 22L15 11.500L3 1Z" fill="#e8435f" stroke="#14181c" strokeWidth="1" />
      </svg>
    )}
  </li>
);

const Picker = () => (
  <aside className="flex w-[312px] shrink-0 flex-col bg-[#41494f]">
    <div className="flex h-20 items-center gap-[59px] bg-linear-to-b from-[#3f474e] to-[#434b51] pt-6 pl-[33px]">
      <button type="button" aria-label="Patterns">
        <PianoIcon className="h-[22px] w-[30px] text-[#dbe4e8]" />
      </button>
      <button type="button" aria-label="Audio clips">
        <WaveIcon className="h-7 w-[42px] text-[#545d63]" />
      </button>
      <button type="button" aria-label="Automation clips">
        <AutoIcon className="h-[26px] w-8 text-[#545d63]" />
      </button>
    </div>
    <div className="flex min-h-0 flex-1 border-y-2 border-l-2 border-[#20292f]">
      <ul className="flex-1 overflow-hidden border-r-2 border-[#20292f] bg-[#333d45] pt-1.5 pr-0.5 pl-1.5">
        {PATTERNS.map((item) => (
          <PatternCard key={item.id} item={item} />
        ))}
      </ul>
      <div className={`w-[30px] border-r-2 border-[#20292f] ${HATCH}`}>
        <div className="flex h-7 items-center justify-center border-2 border-[#636b72] bg-[#4c545b]">
          <i className="h-[18px] w-[3px] bg-[#1c2329]" />
        </div>
      </div>
    </div>
    <button
      type="button"
      aria-label="Add pattern"
      className="flex h-10 items-center justify-center bg-linear-to-b from-[#454d54] to-[#3f474d] pr-[26px]"
    >
      <Plus />
    </button>
  </aside>
);

const ToolPanel = () => (
  <div className="flex w-[223px] shrink-0 pt-0.5">
    <button type="button" aria-label="Add track" className="relative flex h-20 w-[60px] items-end justify-center pb-4 pl-2.5">
      <svg viewBox="0 0 60 78" className="absolute top-0 left-0 h-[78px] w-[60px]">
        <path d="M1 78L18 12Q21 1 28 1H58V77H1Z" fill="#4f575e" stroke="#646c73" strokeWidth="2" />
        <path d="M0 72L16 10Q19 0 26 0" fill="none" stroke="#1d262d" strokeWidth="2" />
      </svg>
      <span className="relative">
        <Plus />
      </span>
    </button>
    <div className="ml-px flex h-[78px] flex-1 flex-col justify-between border-2 border-[#646c73] bg-[#4f575e] px-[7px] pt-[3px] pb-1">
      <div className="flex items-center justify-between pr-1">
        <WaveIcon className="h-7 w-[42px] text-[#788187]" />
        <AutoIcon className="h-[26px] w-8 text-[#e4eaed]" />
        <PianoIcon className="h-[22px] w-[30px] text-[#757d83]" />
      </div>
      <div className="flex items-center justify-between pr-1 pl-2.5 text-[14px] font-semibold text-[#d8dde0]">
        <label className="flex items-center gap-1">
          STEP
          <input
            type="checkbox"
            className="size-[21px] appearance-none rounded-md border-2 border-[#c3c9cc]"
          />
        </label>
        <label className="flex items-center gap-1">
          SLIDE
          <input
            type="radio"
            defaultChecked
            className="size-[18px] appearance-none rounded-full border-2 border-[#747c82] bg-[radial-gradient(circle,#dfe5e8_0_4px,transparent_5px)]"
          />
        </label>
      </div>
    </div>
    <span className="w-0.5 bg-[#1d262d]" />
  </div>
);

const App = () => {
  return (
    <div className="flex h-screen overflow-hidden bg-[#454c52] font-['Open_Sans','Noto_Sans',sans-serif]">
      <Picker />
      <main className="ml-[11px] flex min-w-0 flex-1 flex-col bg-[#38424a]">
        <header className="flex h-20 shrink-0 bg-[#434a51]">
          <ToolPanel />
          <div className="flex min-w-0 flex-1 flex-col bg-[#38424a]">
            <div className="flex h-11 items-start pt-0.5">
              <GreyButton label="Scroll left">
                <Chevron d="M13 3L7 10L13 17" />
              </GreyButton>
              <div className="ml-0.5 h-[38px] flex-1 bg-[#373f47]">
                <Overview />
              </div>
              <GreyButton label="Scroll right">
                <Chevron d="M7 3L13 10L7 17" />
              </GreyButton>
            </div>
            <Ruler />
          </div>
          <div className="flex w-[42px] shrink-0 flex-col gap-0.5 border-l-2 border-[#1d262d] bg-[#1d262d] pt-0.5">
            <GreyButton label="Menu">
              <i className="size-1 bg-[#1c2329]" />
            </GreyButton>
            <GreyButton label="Scroll up">
              <Chevron d="M3 13L10 6L17 13" />
            </GreyButton>
          </div>
        </header>
        <div className="flex min-h-0 flex-1 border-y-2 border-[#1d262d]">
          <div className="flex w-[203px] shrink-0 flex-col overflow-hidden border-l-2 border-[#1d262d] bg-[#1e2930]">
            <div className="h-2 w-[199px] shrink-0 rounded-br-[8px] bg-[#454d53]" />
            {TRACKS.map((track) => (
              <TrackHeader key={track.id} track={track} />
            ))}
          </div>
          <div className="flex w-5 shrink-0 flex-col overflow-hidden border-r-2 border-[#13232d] bg-[#333f47]">
            <span className="h-2 shrink-0 border-b border-[#17242c]" />
            {TRACKS.map((track) => (
              <span
                key={track.id}
                className={`shrink-0 border-b border-[#17242c] ${track.tall ? 'h-[72px]' : 'h-8'}`}
              />
            ))}
          </div>
          <div className="relative min-w-0 flex-1 overflow-hidden">
            <GridLines />
            <div className="relative flex flex-col">
              <div className="relative h-2 shrink-0 border-b border-[#0d161c]">
                {STRIPS.map(([from, to]) => (
                  <span
                    key={from}
                    className="absolute inset-y-0 bg-[#3f7a70] bg-[repeating-linear-gradient(90deg,#1f4a47_0_1px,transparent_1px_7px)]"
                    style={{ left: at(from), width: at(to) - at(from) }}
                  />
                ))}
              </div>
              {TRACKS.map((track) => (
                <Lane key={track.id} track={track} />
              ))}
            </div>
          </div>
          <div className={`flex w-[42px] shrink-0 flex-col justify-between border-x-2 border-[#1d262d] pt-2 ${HATCH}`}>
            <div className="h-[66px] border-2 border-[#636b72] bg-[#4e565d]" />
            <GreyButton label="Scroll down">
              <Chevron d="M3 7L10 14L17 7" />
            </GreyButton>
          </div>
        </div>
      </main>
    </div>
  );
};

export default App;
